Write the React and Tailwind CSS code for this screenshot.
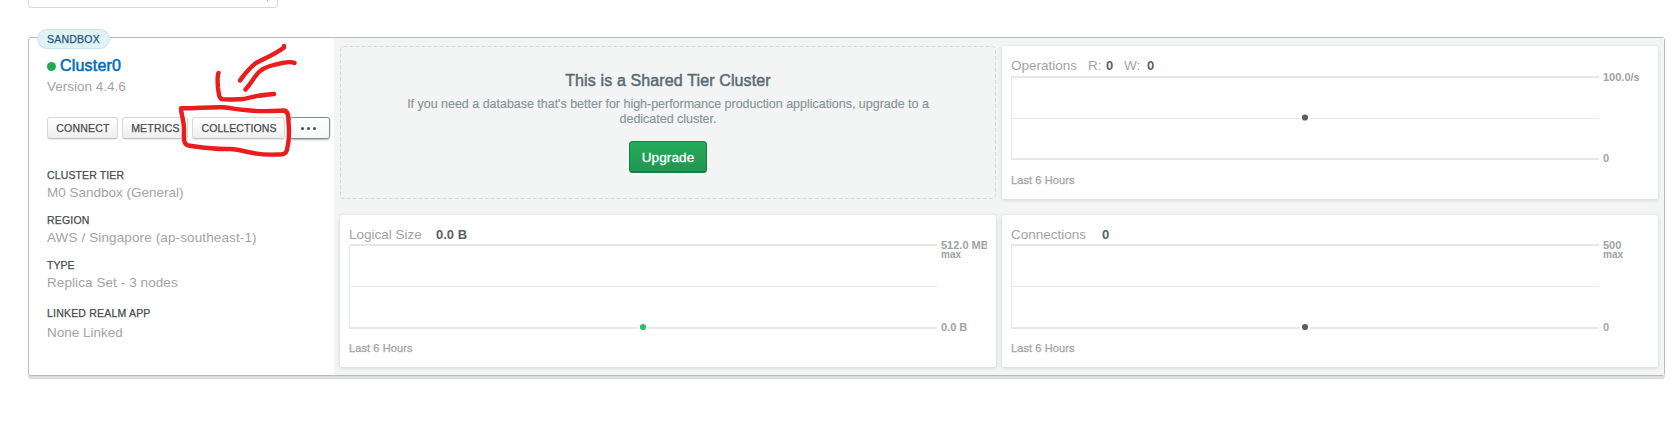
const medium = "[-webkit-text-stroke:0.25px_currentColor]";

function ActionButton({ children, className }) {
  return (
    <button
      className={`h-[22px] rounded-[3px] border border-[#d5d8d8] border-b-[#c3c6c6] bg-linear-to-b from-white to-[#efeff0] pl-px text-center text-[10.5px] leading-[20px] text-[#464c4f] shadow-[0_1px_0_rgba(0,0,0,0.08)] ${medium} ${className}`}
    >
      {children}
    </button>
  );
}

function Detail({ label, labelClass, value, valueClass, className = "mb-[10px]" }) {
  return (
    <div className={className}>
      <div className={`h-[17px] text-[10.5px] leading-[16px] text-[#464c4f] ${medium} ${labelClass}`}>{label}</div>
      <div className={`text-[13.5px] leading-[18px] text-[#a2a4a4] ${valueClass}`}>{value}</div>
    </div>
  );
}

function Chart({ height, dotY, dotColor, mid }) {
  return (
    <svg width="588" height={height} className="block shrink-0 overflow-visible" shapeRendering="crispEdges">
      <rect x="0" y="0" width="1" height={height} fill="#e7e8e8" />
      <rect x="0" y="0" width="588" height="2" fill="#e7e8e8" />
      <rect x="0" y={mid} width="588" height="1" fill="#e7e8e8" />
      <rect x="0" y={height - 2} width="588" height="2" fill="#e7e8e8" />
      <circle cx="294" cy={dotY} r="5" fill="#fff" shapeRendering="auto" />
      <circle cx="294" cy={dotY} r="3.1" fill={dotColor} shapeRendering="auto" />
    </svg>
  );
}

function MetricCard({ title, titleClass, height, dotY, mid, dotColor = "#5a6063", top, max, bottom, footClass }) {
  return (
    <section className="overflow-hidden rounded-[3px] bg-white pl-[9px] pt-[10px] shadow-[0_1px_4px_rgba(0,0,0,0.14)]">
      <div className={`flex whitespace-pre text-[13.5px] text-[#a2a4a4] ${titleClass}`}>{title}</div>
      <div className="flex">
        <Chart height={height} dotY={dotY} mid={mid} dotColor={dotColor} />
        <div className="-mb-1 -mt-1 ml-1 flex w-[46px] flex-col justify-between overflow-hidden whitespace-nowrap text-[11px] font-bold leading-[10px] text-[#a0a2a2]">
          <div>
            <div>{top}</div>
            {max && <div className="text-[10px] leading-[9px]">max</div>}
          </div>
          <div className="-mt-px mb-px">{bottom}</div>
        </div>
      </div>
      <div className={`text-[11px] leading-[16px] tracking-[0.1px] text-[#a0a2a2] ${medium} ${footClass}`}>Last 6 Hours</div>
    </section>
  );
}

function Value({ children, className }) {
  return <b className={`text-[13px] text-[#5a6063] ${className}`}>{children}</b>;
}

export default function App() {
  return (
    <div className="relative h-[428px] w-[1671px] overflow-hidden bg-white pl-[28px] font-['Liberation_Sans',Arial,sans-serif]">
      <div className="flex h-[8px] w-[250px] justify-end rounded-b-[4px] border border-t-0 border-[#d5d8d8] pr-[9px]">
        <span className="h-px w-px bg-[#9a9c9c]" />
      </div>

      <main className="relative mt-[29px] flex h-[339px] w-[1637px] rounded-[3px] border border-[#b8bcbb] shadow-[0_3px_0_#dcdddd]">
        <span className={`absolute left-[8px] top-[-9px] h-[20px] w-[73px] rounded-full border border-[#c5e4f2] bg-[#e1f2f6] text-center text-[10.5px] leading-[19px] tracking-[0.25px] text-[#1a567e] ${medium}`}>
          SANDBOX
        </span>

        <aside className="w-[305px] shrink-0 pl-[18px] pt-[18px]">
          <div className="flex h-[22px] items-start">
            <span className="mt-[6px] size-[9px] rounded-full bg-[#21ab58]" />
            <a className="ml-[4px] text-[16px] leading-[20px] tracking-[0.2px] text-[#006cbc] [-webkit-text-stroke:0.55px_currentColor]">Cluster0</a>
          </div>
          <div className="text-[13.5px] leading-[18px] text-[#a2a4a4]">Version 4.4.6</div>

          <div className="mb-[28px] mt-[21px] flex w-[283px]">
            <ActionButton className="w-[71px] tracking-[0.2px]">CONNECT</ActionButton>
            <ActionButton className="ml-1 w-[66px] tracking-[0.2px]">METRICS</ActionButton>
            <ActionButton className="ml-1 w-[93px] tracking-[0.08px]">COLLECTIONS</ActionButton>
            <button className="ml-1 flex h-[22px] w-[41px] items-center justify-center gap-[3px] rounded-[3px] border border-[#7f8d90] bg-linear-to-b from-white to-[#f6f7f7] pr-[2px] shadow-[0_1px_2px_rgba(0,0,0,0.3)]">
              <span className="size-[3px] rounded-full bg-[#3d4f58]" />
              <span className="size-[3px] rounded-full bg-[#3d4f58]" />
              <span className="size-[3px] rounded-full bg-[#3d4f58]" />
            </button>
          </div>

          <Detail label="CLUSTER TIER" labelClass="tracking-[0.13px]" value="M0 Sandbox (General)" />
          <Detail label="REGION" labelClass="tracking-[0.2px]" value="AWS / Singapore (ap-southeast-1)" valueClass="tracking-[0.12px]" />
          <Detail label="TYPE" value="Replica Set - 3 nodes" valueClass="tracking-[0.08px]" />
          <Detail className="mt-[13px]" label="LINKED REALM APP" labelClass="mb-[2px] tracking-[0.2px]" value="None Linked" />
        </aside>

        <div className="grid grow grid-cols-[656px_656px] grid-rows-[153px_152px] gap-x-[6px] gap-y-[16px] bg-[#f3f5f4] pl-[6px] pt-[8px]">
          <section className="relative flex flex-col items-center pt-[25px]">
            <svg className="absolute inset-0" width="656" height="153">
              <rect x="0.5" y="0.5" width="655" height="152" rx="3" fill="none" stroke="#d6dad9" strokeDasharray="4 2" />
            </svg>
            <h2 className="text-[16px] leading-[20px] tracking-[0.13px] text-[#5b6b73] [-webkit-text-stroke:0.5px_currentColor]">This is a Shared Tier Cluster</h2>
            <p className="mt-[6px] w-[540px] text-center text-[12.5px] leading-[15px] tracking-[-0.02px] text-[#89979b] [-webkit-text-stroke:0.2px_currentColor]">
              If you need a database that's better for high-performance production applications, upgrade to a dedicated cluster.
            </p>
            <button className="mt-[14px] h-[32px] w-[78px] rounded-[3px] border border-[#158242] bg-linear-to-b from-[#21ab58] to-[#239553] text-[13.5px] leading-[29px] tracking-[0.12px] text-white shadow-[inset_0_-1px_0_#158242] [-webkit-text-stroke:0.3px_currentColor]">
              Upgrade
            </button>
          </section>

          <MetricCard
            titleClass="h-[20px] leading-[20px]"
            title={
              <>
                <span className="w-[77px]">Operations</span>
                <span className="w-[18px]">R:</span>
                <Value className="w-[18px]">0</Value>
                <span className="w-[23px]">W:</span>
                <Value>0</Value>
              </>
            }
            height={84}
            mid={42}
            dotY={41.5}
            top="100.0/s"
            bottom="0"
            footClass="mt-[12px]"
          />

          <MetricCard
            titleClass="h-[19px] leading-[19px]"
            title={
              <>
                <span className="w-[87px]">Logical Size</span>
                <Value>0.0 B</Value>
              </>
            }
            height={85}
            mid={42}
            dotY={83}
            dotColor="#29c06a"
            top="512.0 MB"
            max
            bottom="0.0 B"
            footClass="mt-[11px]"
          />

          <MetricCard
            titleClass="h-[19px] leading-[19px]"
            title={
              <>
                <span className="w-[91px]">Connections</span>
                <Value>0</Value>
              </>
            }
            height={85}
            mid={42}
            dotY={83}
            top="500"
            max
            bottom="0"
            footClass="mt-[11px]"
          />
        </div>
      </main>

      <svg className="pointer-events-none absolute left-0 top-0" width="340" height="170" fill="none" stroke="#ea1c1c" strokeWidth="4.4" strokeLinecap="round" strokeLinejoin="round">
        <path d="M284 46 L284 47.500 C274 55 264 58.500 256 63 C248 69 244 75 240 80.500" />
        <path d="M294.500 63 C290 60.500 279 63.500 270 66 C256 70 255 79 245.500 89.500" />
        <path d="M218.500 73 C217 76 217.500 82 218 88 C219 95 219 99 223 99.300 C230 99.500 239 99.500 244 99 C253 96 262 95 274 94" />
        <path d="M181 108.300 C196 108.500 207 107 222 107.300 C233 108 238 110 245 110 C259 112 272 111 284 110.500 C288 111 288.500 115 288.500 122 C289.500 133 289 142 287 150 C286 154 283 154.500 278 154.500 C267 155 257 154 248 152 C240 150 234 148.500 228 149 C213 149.500 199 147 188 145.500 C183 144 184 138 184 129 C184 120 181 114 181 108.300" />
      </svg>
    </div>
  );
}
